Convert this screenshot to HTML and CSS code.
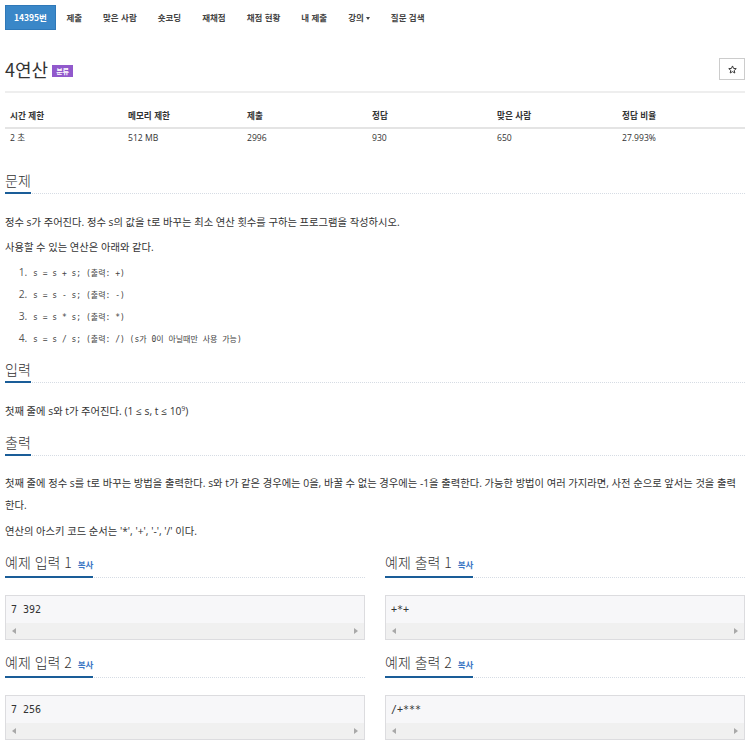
FILE: index.html
```html
<!DOCTYPE html>
<html lang="ko">
<head>
<meta charset="utf-8">
<title>4연산</title>
<link rel="stylesheet" href="styles.css">
</head>
<body>
<ul class="nav">
  <li class="nav-item active">14395번</li>
  <li class="nav-item">제출</li>
  <li class="nav-item">맞은 사람</li>
  <li class="nav-item">숏코딩</li>
  <li class="nav-item">재채점</li>
  <li class="nav-item">채점 현황</li>
  <li class="nav-item">내 제출</li>
  <li class="nav-item">강의<span class="caret"></span></li>
  <li class="nav-item">질문 검색</li>
</ul>

<div class="page">
  <div class="title-row">
    <h1 class="title">4연산 <span class="label">분류</span></h1>
    <button class="star-btn" type="button"><svg width="9" height="9" viewBox="0 0 24 24"><path d="M12 2.5l2.9 6.6 7.1.6-5.4 4.7 1.6 7-6.2-3.7-6.2 3.7 1.6-7L2 9.7l7.1-.6z" fill="none" stroke="#333" stroke-width="2.6" stroke-linejoin="round"/></svg></button>
  </div>

  <table class="info">
    <thead>
      <tr><th class="c1">시간 제한</th><th class="c2">메모리 제한</th><th class="c3">제출</th><th class="c3">정답</th><th class="c3">맞은 사람</th><th>정답 비율</th></tr>
    </thead>
    <tbody>
      <tr><td>2 초</td><td>512 MB</td><td>2996</td><td>930</td><td>650</td><td>27.993%</td></tr>
    </tbody>
  </table>

  <section class="sec sec-problem">
    <div class="headline"><h2>문제</h2></div>
    <p>정수 s가 주어진다. 정수 s의 값을 t로 바꾸는 최소 연산 횟수를 구하는 프로그램을 작성하시오.</p>
    <p>사용할 수 있는 연산은 아래와 같다.</p>
    <ol class="ops">
      <li><code>s = s + s; (출력: +)</code></li>
      <li><code>s = s - s; (출력: -)</code></li>
      <li><code>s = s * s; (출력: *)</code></li>
      <li><code>s = s / s; (출력: /) (s가 0이 아닐때만 사용 가능)</code></li>
    </ol>
  </section>

  <section class="sec sec-input">
    <div class="headline"><h2>입력</h2></div>
    <p>첫째 줄에 s와 t가 주어진다. (1 ≤ s, t ≤ 10<sup>9</sup>)</p>
  </section>

  <section class="sec sec-output">
    <div class="headline"><h2>출력</h2></div>
    <p class="wrap">첫째 줄에 정수 s를 t로 바꾸는 방법을 출력한다. s와 t가 같은 경우에는 0을, 바꿀 수 없는 경우에는 -1을 출력한다. 가능한 방법이 여러 가지라면, 사전 순으로 앞서는 것을 출력한다.</p>
    <p>연산의 아스키 코드 순서는 '*', '+', '-', '/' 이다.</p>
  </section>

  <div class="samples">
    <div class="sample">
      <div class="headline"><h2>예제 입력 1 <span class="copy">복사</span></h2></div>
      <div class="pre"><div class="pre-text">7 392</div><div class="hscroll"><span class="arr-l"></span><span class="arr-r"></span></div></div>
    </div>
    <div class="sample">
      <div class="headline"><h2>예제 출력 1 <span class="copy">복사</span></h2></div>
      <div class="pre"><div class="pre-text">+*+</div><div class="hscroll"><span class="arr-l"></span><span class="arr-r"></span></div></div>
    </div>
    <div class="sample">
      <div class="headline"><h2>예제 입력 2 <span class="copy">복사</span></h2></div>
      <div class="pre"><div class="pre-text">7 256</div><div class="hscroll"><span class="arr-l"></span><span class="arr-r"></span></div></div>
    </div>
    <div class="sample">
      <div class="headline"><h2>예제 출력 2 <span class="copy">복사</span></h2></div>
      <div class="pre"><div class="pre-text">/+***</div><div class="hscroll"><span class="arr-l"></span><span class="arr-r"></span></div></div>
    </div>
  </div>
</div>
</body>
</html>
```

FILE: styles.css
```css
* { box-sizing: border-box; }
html, body { margin: 0; padding: 0; background: #fff; }
body {
  font-family: "Open Sans", "Noto Sans CJK KR", sans-serif;
  font-size: 10px;
  color: #333;
  width: 750px;
  overflow: hidden;
}

.nav {
  list-style: none;
  margin: 0;
  padding: 5px 5px 0;
  display: flex;
  height: 30px;
}
.nav-item {
  height: 25px;
  line-height: 25px;
  padding: 0 10.5px;
  font-size: 8.5px;
  font-weight: bold;
  color: #444;
  font-family: "Noto Sans CJK KR", sans-serif;
}
.nav-item.active {
  background: #3a87c8;
  color: #fff;
  border: 1px solid #2f78b8;
  line-height: 23px;
  padding: 0 8px;
}
.caret {
  display: inline-block;
  width: 0; height: 0;
  margin-left: 2px;
  vertical-align: middle;
  border-top: 3px solid #444;
  border-left: 2.5px solid transparent;
  border-right: 2.5px solid transparent;
}

.page { padding: 0 5px; }

.title-row {
  margin-top: 28px;
  display: flex;
  justify-content: space-between;
  align-items: center;
  padding-bottom: 11px;
  border-bottom: 2px solid #eeeeee;
}
.title {
  margin: 0;
  font-family: "Noto Sans CJK KR", sans-serif;
  font-weight: normal;
  font-size: 18px;
  line-height: 22px;
  color: #333;
  display: flex;
  align-items: center;
}
.label {
  display: inline-block;
  margin-left: 4px;
  margin-top: 4px;
  background: #9159cc;
  color: #fff;
  font-size: 7px;
  font-weight: bold;
  line-height: 12px;
  height: 12px;
  padding: 0 4px;
}
.star-btn {
  width: 26px;
  height: 22px;
  border: 1px solid #ccc;
  background: #fff;
  padding: 0;
  display: flex;
  align-items: center;
  justify-content: center;
}

.info {
  margin-top: 10px;
  width: 740px;
  border-collapse: collapse;
  table-layout: fixed;
}
.info th, .info td {
  text-align: left;
  padding: 0 5px;
  font-size: 8.6px;
  font-family: "Noto Sans CJK KR", sans-serif;
}
.info td { font-family: "Open Sans", "Noto Sans CJK KR", sans-serif; }
.info th {
  height: 25px;
  font-weight: bold;
  border-bottom: 2px solid #e4e4e4;
}
.info td { height: 18px; }
.info .c1 { width: 118px; }
.info .c2 { width: 119px; }
.info .c3 { width: 125px; }

.headline {
  border-bottom: 1px dotted #d6dce4;
  display: flex;
  align-items: flex-end;
}
.headline h2 {
  margin: 0 0 -1px;
  font-family: "Noto Sans CJK KR", sans-serif;
  font-weight: 300;
  font-size: 14px;
  line-height: 20px;
  padding-bottom: 2px;
  border-bottom: 2px solid #1a5d98;
  display: inline-block;
  color: #333;
}

.sec p {
  margin: 0 0 5px;
  line-height: 20px;
  font-size: 10.3px;
}
.sec-problem { margin-top: 24px; }
.sec-problem .headline { margin-bottom: 18px; }
.ops {
  margin: 2px 0 0;
  padding-left: 25px;
  font-size: 10.3px;
}
.ops li {
  line-height: 21px;
  color: #555;
  padding-left: 3px;
}
.ops code {
  font-family: "DejaVu Sans Mono", "Noto Sans CJK KR", monospace;
  font-size: 8px;
  color: #444;
}

.sec-input { margin-top: 9px; }
.sec-input .headline { margin-bottom: 18px; }
sup { font-size: 6.5px; line-height: 0; }

.sec-output { margin-top: 11px; }
.sec-output .headline { margin-bottom: 16px; }
.sec-output p.wrap { line-height: 22px; margin-bottom: 5px; }

.samples {
  display: grid;
  grid-template-columns: 360px 360px;
  column-gap: 20px;
  margin-top: 11px;
}
.sample { margin-bottom: 12px; }
.sample .headline { margin-bottom: 17px; }
.copy {
  font-size: 8.5px;
  color: #3a76c4;
  font-weight: bold;
  margin-left: 2px;
}
.pre {
  border: 1px solid #dcdcdf;
  background: #f7f7f9;
  height: 45px;
  display: flex;
  flex-direction: column;
}
.pre-text {
  flex: 1;
  padding: 0 5px;
  line-height: 27px;
  font-family: "DejaVu Sans Mono", monospace;
  font-size: 10px;
  color: #333;
}
.hscroll {
  height: 16px;
  background: #f0f0f0;
  display: flex;
  justify-content: space-between;
  align-items: center;
  padding: 0 6px;
}
.arr-l {
  width: 0; height: 0;
  border-top: 3.5px solid transparent;
  border-bottom: 3.5px solid transparent;
  border-right: 4px solid #a8a8a8;
}
.arr-r {
  width: 0; height: 0;
  border-top: 3.5px solid transparent;
  border-bottom: 3.5px solid transparent;
  border-left: 4px solid #a8a8a8;
}
```
